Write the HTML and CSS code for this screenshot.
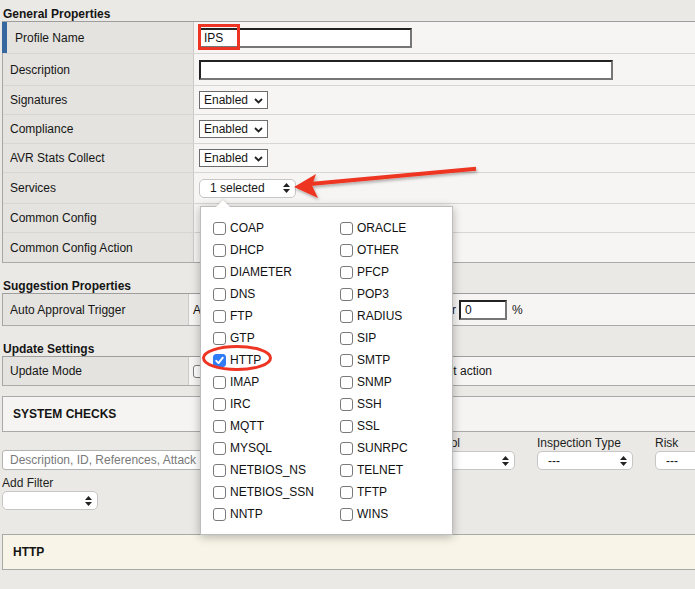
FILE: index.html
```html
<!DOCTYPE html>
<html>
<head>
<meta charset="utf-8">
<title>IPS Profile</title>
<link rel="stylesheet" href="styles.css">
</head>
<body>
<div class="page">
  <div class="heading">General Properties</div>
  <div class="props">
    <div class="row r31 first">
      <div class="label lg active">Profile Name</div>
      <div class="value"><input class="txt w213" value="IPS"></div>
    </div>
    <div class="row r32">
      <div class="label lg">Description</div>
      <div class="value"><input class="txt w414" value=""></div>
    </div>
    <div class="row r29">
      <div class="label lg">Signatures</div>
      <div class="value"><div class="sel-old">Enabled<svg class="chev" width="9" height="6" viewBox="0 0 9 6"><path d="M1 1l3.5 3.5L8 1" fill="none" stroke="#222" stroke-width="1.8"/></svg></div></div>
    </div>
    <div class="row r29">
      <div class="label lg">Compliance</div>
      <div class="value"><div class="sel-old">Enabled<svg class="chev" width="9" height="6" viewBox="0 0 9 6"><path d="M1 1l3.5 3.5L8 1" fill="none" stroke="#222" stroke-width="1.8"/></svg></div></div>
    </div>
    <div class="row r29">
      <div class="label lg">AVR Stats Collect</div>
      <div class="value"><div class="sel-old">Enabled<svg class="chev" width="9" height="6" viewBox="0 0 9 6"><path d="M1 1l3.5 3.5L8 1" fill="none" stroke="#222" stroke-width="1.8"/></svg></div></div>
    </div>
    <div class="row r31">
      <div class="label lg">Services</div>
      <div class="value"><div class="sel-round w97">1 selected<svg class="updown" width="7" height="10" viewBox="0 0 7 10"><path d="M3.5 0L7 4H0z M3.5 10L0 6h7z" fill="#222"/></svg></div></div>
    </div>
    <div class="row r29">
      <div class="label lg">Common Config</div>
      <div class="value"></div>
    </div>
    <div class="row r30">
      <div class="label lg">Common Config Action</div>
      <div class="value"></div>
    </div>
  </div>

  <div class="heading mt16">Suggestion Properties</div>
  <div class="props">
    <div class="row r31 first">
      <div class="label ls">Auto Approval Trigger</div>
      <div class="value vs">
        <span class="approve"><span>Auto approve</span><span>greater than or</span></span>
        <input class="txt w48 pct" value="0">
        <span class="unit">%</span>
      </div>
    </div>
  </div>

  <div class="heading mt16">Update Settings</div>
  <div class="props">
    <div class="row r28 first">
      <div class="label ls">Update Mode</div>
      <div class="value vs">
        <span class="cb"></span>
        <span class="upd"><span>Apply new signatures with</span><span>default action</span></span>
      </div>
    </div>
  </div>

  <div class="box checks">SYSTEM CHECKS</div>

  <div class="filters">
    <input class="search" placeholder="Description, ID, References, Attack">
    <div class="fgroup first-group">
      <div class="flabel">Protocol</div>
      <div class="sel-round w99"><span></span><svg class="updown" width="7" height="10" viewBox="0 0 7 10"><path d="M3.5 0L7 4H0z M3.5 10L0 6h7z" fill="#222"/></svg></div>
    </div>
    <div class="fgroup">
      <div class="flabel">Inspection Type</div>
      <div class="sel-round w96">---<svg class="updown" width="7" height="10" viewBox="0 0 7 10"><path d="M3.5 0L7 4H0z M3.5 10L0 6h7z" fill="#222"/></svg></div>
    </div>
    <div class="fgroup">
      <div class="flabel">Risk</div>
      <div class="sel-round w96">---<svg class="updown" width="7" height="10" viewBox="0 0 7 10"><path d="M3.5 0L7 4H0z M3.5 10L0 6h7z" fill="#222"/></svg></div>
    </div>
  </div>

  <div class="add-filter">
    <div class="flabel">Add Filter</div>
    <div class="sel-round w96"><span></span><svg class="updown" width="7" height="10" viewBox="0 0 7 10"><path d="M3.5 0L7 4H0z M3.5 10L0 6h7z" fill="#222"/></svg></div>
  </div>

  <div class="box http">HTTP</div>

  <div class="menu">
    <div class="caret"></div>
    <div class="menu-grid">
      <label class="item"><span class="cb"></span>COAP</label>
      <label class="item"><span class="cb"></span>DHCP</label>
      <label class="item"><span class="cb"></span>DIAMETER</label>
      <label class="item"><span class="cb"></span>DNS</label>
      <label class="item"><span class="cb"></span>FTP</label>
      <label class="item"><span class="cb"></span>GTP</label>
      <label class="item"><span class="cb checked"><svg width="11" height="11" viewBox="0 0 11 11"><path d="M2.3 5.8l2.2 2.3 4.3-5.4" fill="none" stroke="#fff" stroke-width="1.9" stroke-linecap="round" stroke-linejoin="round"/></svg></span>HTTP</label>
      <label class="item"><span class="cb"></span>IMAP</label>
      <label class="item"><span class="cb"></span>IRC</label>
      <label class="item"><span class="cb"></span>MQTT</label>
      <label class="item"><span class="cb"></span>MYSQL</label>
      <label class="item"><span class="cb"></span>NETBIOS_NS</label>
      <label class="item"><span class="cb"></span>NETBIOS_SSN</label>
      <label class="item"><span class="cb"></span>NNTP</label>
      <label class="item"><span class="cb"></span>ORACLE</label>
      <label class="item"><span class="cb"></span>OTHER</label>
      <label class="item"><span class="cb"></span>PFCP</label>
      <label class="item"><span class="cb"></span>POP3</label>
      <label class="item"><span class="cb"></span>RADIUS</label>
      <label class="item"><span class="cb"></span>SIP</label>
      <label class="item"><span class="cb"></span>SMTP</label>
      <label class="item"><span class="cb"></span>SNMP</label>
      <label class="item"><span class="cb"></span>SSH</label>
      <label class="item"><span class="cb"></span>SSL</label>
      <label class="item"><span class="cb"></span>SUNRPC</label>
      <label class="item"><span class="cb"></span>TELNET</label>
      <label class="item"><span class="cb"></span>TFTP</label>
      <label class="item"><span class="cb"></span>WINS</label>
    </div>
  </div>

  <svg class="annot" width="695" height="589" viewBox="0 0 695 589">
    <defs>
      <filter id="sh" x="-10%" y="-50%" width="120%" height="200%">
        <feDropShadow dx="1" dy="2" stdDeviation="1.5" flood-color="#000" flood-opacity="0.3"/>
      </filter>
    </defs>
    <rect x="199.5" y="25.5" width="39" height="23" fill="none" stroke="#ee3524" stroke-width="3"/>
    <ellipse cx="237" cy="358" rx="33.5" ry="11.5" fill="none" stroke="#ee3524" stroke-width="3"/>
    <g filter="url(#sh)">
      <line x1="310" y1="184" x2="476" y2="168.7" stroke="#ee3524" stroke-width="4"/>
      <polygon points="294,187 316,174 312,185.5 318,198" fill="#ee3524"/>
    </g>
  </svg>
</div>
</body>
</html>
```
FILE: styles.css
```css
html, body {
  margin: 0;
  padding: 0;
  overflow: hidden;
}
body {
  width: 695px;
  height: 589px;
  background: #ebe9e5;
  font-family: "Liberation Sans", Arial, sans-serif;
  font-size: 12px;
  color: #161616;
}
.page {
  position: relative;
  width: 780px;
  padding-left: 2px;
}
.heading {
  font-weight: bold;
  line-height: 14px;
  height: 14px;
  padding-top: 7px;
  padding-left: 1px;
  color: #151515;
}
.heading.mt16 {
  padding-top: 0;
  margin-top: 16px;
}
.props {
  border-top: 1px solid #9e9e9e;
  border-left: 1px solid #a6a6a6;
  border-bottom: 1px solid #aaaaaa;
}
.row {
  display: flex;
  box-sizing: border-box;
  border-top: 1px solid #d7d6d3;
}
.row.first { border-top: 0; }
.r28 { height: 28px; }
.r29 { height: 29px; }
.r30 { height: 30px; }
.r31 { height: 31px; }
.r32 { height: 32px; }
.label {
  flex: none;
  box-sizing: border-box;
  background: #e4e3df;
  border-right: 1px solid #cbcac7;
  padding-left: 7px;
  display: flex;
  align-items: center;
}
.lg { width: 191px; }
.ls { width: 186px; }
.label.active {
  border-left: 5px solid #36689f;
  margin-left: -1px;
  width: 192px;
  padding-left: 8px;
}
.value {
  flex: 1;
  background: #f6f5f3;
  display: flex;
  align-items: center;
  padding-left: 5px;
}
.value.vs { padding-left: 4px; }
.txt {
  flex: none;
  box-sizing: border-box;
  height: 20px;
  margin: 0;
  border: 2px solid;
  border-color: #222 #767676 #767676 #222;
  background: #fff;
  font: 12px "Liberation Sans", Arial, sans-serif;
  color: #111;
  padding: 0 3px;
  outline: none;
}
.w213 { width: 213px; }
.w414 { width: 414px; }
.w48 { width: 48px; }
.txt.pct {
  margin-left: 3px;
  padding-left: 4px;
}
.unit { margin-left: 5px; }
.approve, .upd {
  flex: none;
  display: flex;
  justify-content: space-between;
  white-space: nowrap;
}
.approve { width: 263px; }
.upd { width: 282px; margin-left: 4px; }
.sel-old {
  box-sizing: border-box;
  width: 69px;
  height: 18px;
  border: 1px solid #6c6c6c;
  background: #fff;
  display: flex;
  align-items: center;
  justify-content: space-between;
  padding: 0 4px 0 4px;
  font-size: 12px;
}
.chev { margin-top: 1px; }
.sel-round {
  flex: none;
  box-sizing: border-box;
  height: 19px;
  border: 1px solid #c6c6c6;
  border-radius: 5px;
  background: #fff;
  display: flex;
  align-items: center;
  justify-content: space-between;
  padding: 0 5px 0 10px;
}
.w96 { width: 96px; }
.w97 { width: 97px; }
.w99 { width: 99px; }
.cb {
  flex: none;
  box-sizing: border-box;
  width: 13px;
  height: 13px;
  border: 1px solid #7a7a7a;
  border-radius: 3px;
  background: #fff;
  display: flex;
  align-items: center;
  justify-content: center;
}
.cb.checked {
  background: #2f7cf6;
  border-color: #2f7cf6;
}
.box {
  box-sizing: border-box;
  height: 36px;
  border: 1px solid #a9a9a9;
  padding-left: 10px;
  display: flex;
  align-items: center;
  font-weight: bold;
  color: #141414;
}
.checks {
  margin-top: 10px;
  background: #f5f4f2;
}
.http {
  margin-top: 24px;
  background: #f8f5e8;
}
.filters {
  margin-top: 4px;
  display: flex;
  align-items: flex-end;
}
.search {
  flex: none;
  box-sizing: border-box;
  width: 320px;
  height: 20px;
  margin: 0;
  border: 1px solid #b3b3b3;
  border-radius: 3px;
  background: #fff;
  padding: 0 7px;
  font: 12px "Liberation Sans", Arial, sans-serif;
  outline: none;
}
.search::placeholder { color: #7a7a7a; }
.fgroup {
  flex: none;
  display: flex;
  flex-direction: column;
  margin-left: 22px;
}
.fgroup.first-group { margin-left: 94px; }
.flabel {
  line-height: 14px;
  height: 14px;
  margin-bottom: 1px;
  color: #1e1e1e;
}
.add-filter {
  margin-top: 6px;
}
.menu {
  position: absolute;
  left: 200px;
  top: 206px;
  width: 253px;
  height: 329px;
  box-sizing: border-box;
  background: #fff;
  border: 1px solid #bdbdbd;
  box-shadow: 0 2px 9px rgba(0, 0, 0, 0.28);
  padding: 10px 0 0 12px;
  z-index: 10;
}
.caret {
  position: absolute;
  top: -7px;
  left: 15px;
  width: 0;
  height: 0;
  border-left: 7px solid transparent;
  border-right: 7px solid transparent;
  border-bottom: 7px solid #fff;
  filter: drop-shadow(0 -1px 1px rgba(0, 0, 0, 0.12));
}
.menu-grid {
  display: grid;
  grid-template-columns: 127px 1fr;
  grid-template-rows: repeat(14, 22px);
  grid-auto-flow: column;
}
.item {
  display: flex;
  align-items: center;
  gap: 4px;
  color: #111;
  white-space: nowrap;
}
.annot {
  position: absolute;
  left: 0;
  top: 0;
  z-index: 20;
  pointer-events: none;
}
```
